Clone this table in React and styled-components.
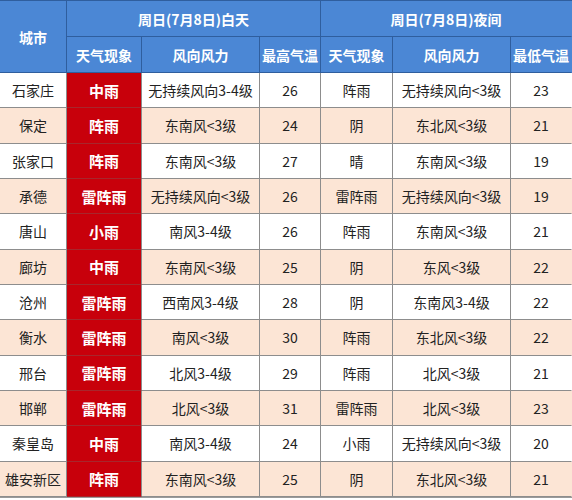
import React from "react";
import styled, { createGlobalStyle } from "styled-components";

const Global = createGlobalStyle`
  html, body { margin: 0; padding: 0; background: #fff; }
  body { font-family: "Noto Sans CJK SC", "Noto Sans", sans-serif; }
`;

const Grid = styled.div`
  display: grid;
  width: 572px;
  height: 498px;
  grid-template-columns: 67px 75px 118px 61px 72px 118px 61px;
  grid-template-rows: 36px 36px repeat(12, 1fr);
  border-top: 1px solid #2f5e9e;
  box-sizing: border-box;
  border-bottom: 1px solid #9a9a9a;
`;

const Head = styled.div`
  background: #4b87d5;
  color: #fff;
  font-weight: 700;
  font-size: 14px;
  display: flex;
  align-items: center;
  justify-content: center;
  border-right: 1px solid ${(p) => (p.$last ? "#4b87d5" : "#2f5e9e")};
  border-bottom: 1px solid #2f5e9e;
  grid-column: ${(p) => p.$col || "auto"};
  grid-row: ${(p) => p.$row || "auto"};
  white-space: nowrap;
`;

const Cell = styled.div`
  display: flex;
  align-items: center;
  justify-content: center;
  font-size: 14px;
  color: #222;
  white-space: nowrap;
  background: ${(p) => (p.$alt ? "#fce5d5" : "#fff")};
  border-right: 1px solid ${(p) => (p.$last ? "transparent" : "#8d8d8d")};
  border-bottom: 1px solid #8d8d8d;
`;

const RedCell = styled(Cell)`
  background: #c8000b;
  color: #fff;
  font-weight: 700;
  font-size: 15px;
  border-bottom-color: #a8262c;
`;

const rows = [
  ["石家庄", "中雨", "无持续风向3-4级", "26", "阵雨", "无持续风向<3级", "23"],
  ["保定", "阵雨", "东南风<3级", "24", "阴", "东北风<3级", "21"],
  ["张家口", "阵雨", "东南风<3级", "27", "晴", "东南风<3级", "19"],
  ["承德", "雷阵雨", "无持续风向<3级", "26", "雷阵雨", "无持续风向<3级", "19"],
  ["唐山", "小雨", "南风3-4级", "26", "阵雨", "东南风<3级", "21"],
  ["廊坊", "中雨", "东南风<3级", "25", "阴", "东风<3级", "22"],
  ["沧州", "雷阵雨", "西南风3-4级", "28", "阴", "东南风3-4级", "22"],
  ["衡水", "雷阵雨", "南风<3级", "30", "阵雨", "东北风<3级", "22"],
  ["邢台", "雷阵雨", "北风3-4级", "29", "阵雨", "北风<3级", "21"],
  ["邯郸", "雷阵雨", "北风<3级", "31", "雷阵雨", "北风<3级", "23"],
  ["秦皇岛", "中雨", "南风3-4级", "24", "小雨", "无持续风向<3级", "20"],
  ["雄安新区", "阵雨", "东南风<3级", "25", "阴", "东北风<3级", "21"],
];

export default function App() {
  return (
    <>
      <Global />
      <Grid>
        <Head $row="1 / 3" $col="1">城市</Head>
        <Head $col="2 / 5">周日(7月8日)白天</Head>
        <Head $col="5 / 8" $last>周日(7月8日)夜间</Head>
        <Head>天气现象</Head>
        <Head>风向风力</Head>
        <Head>最高气温</Head>
        <Head>天气现象</Head>
        <Head>风向风力</Head>
        <Head $last>最低气温</Head>
        {rows.map((r, i) => {
          const alt = i % 2 === 1;
          return (
            <React.Fragment key={i}>
              <Cell $alt={alt}>{r[0]}</Cell>
              <RedCell>{r[1]}</RedCell>
              <Cell $alt={alt}>{r[2]}</Cell>
              <Cell $alt={alt}>{r[3]}</Cell>
              <Cell $alt={alt}>{r[4]}</Cell>
              <Cell $alt={alt}>{r[5]}</Cell>
              <Cell $alt={alt} $last>{r[6]}</Cell>
            </React.Fragment>
          );
        })}
      </Grid>
    </>
  );
}
